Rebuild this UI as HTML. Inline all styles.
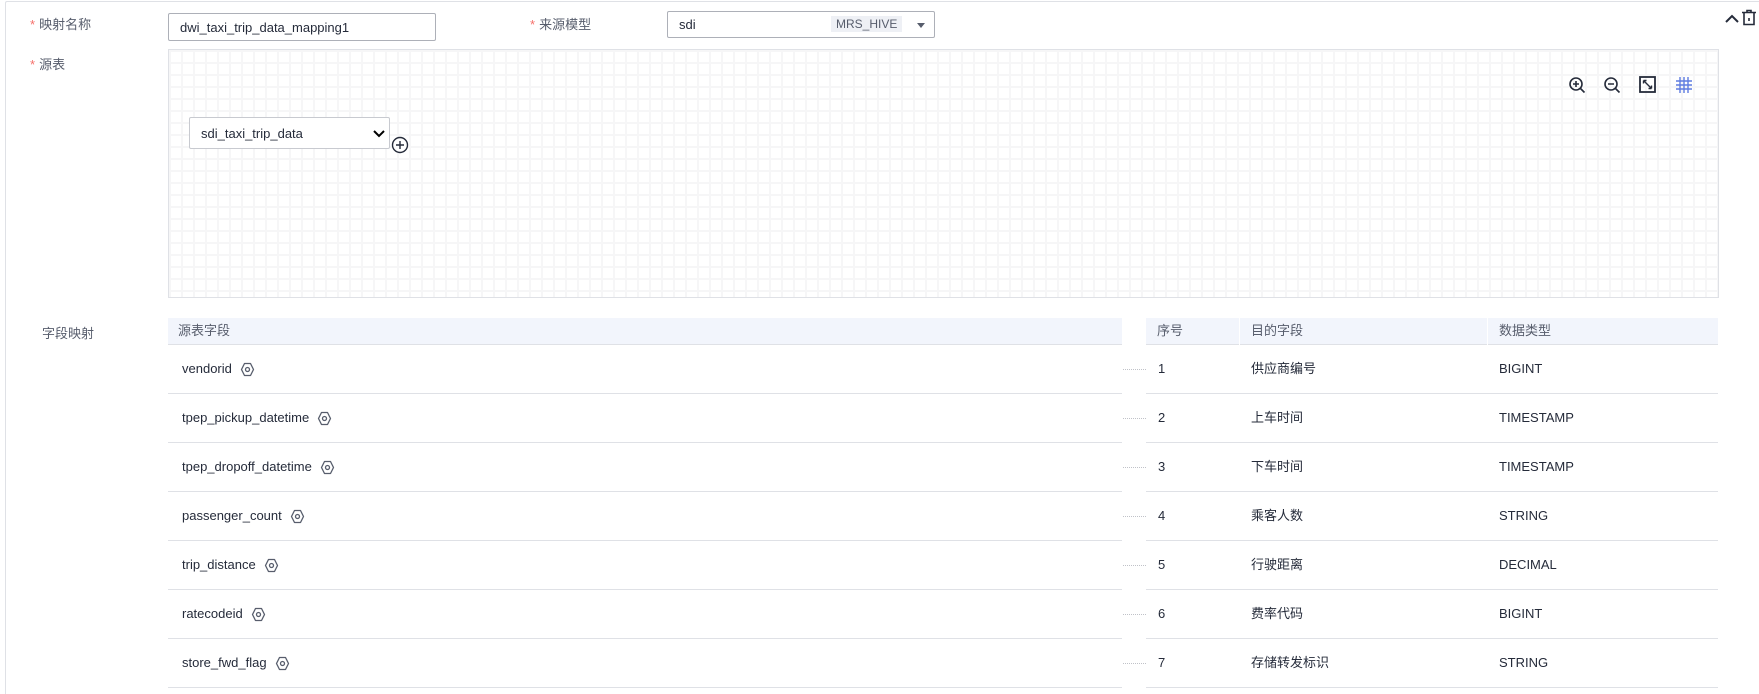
<!DOCTYPE html>
<html><head><meta charset="utf-8"><style>
*{box-sizing:border-box;margin:0;padding:0}
html,body{width:1759px;height:694px;overflow:hidden}
body{background:#fff;font-family:"Liberation Sans","Noto Sans CJK SC",sans-serif;font-size:13px;color:#252b3a;position:relative}
.a{position:absolute}
.card{left:5px;top:1px;width:1754px;height:693px;border:1px solid #dfe1e6;border-bottom:0;border-right:0;border-radius:2px 0 0 0}
.lbl{font-size:13px;color:#575d6c;white-space:nowrap;line-height:20px}
.lbl b{color:#f66f6a;font-weight:normal;margin-right:4px}
.inp{border:1px solid #adb0b8;border-radius:2px;background:#fff;padding-left:11px;display:flex;align-items:center}
.grid{background-color:#fff;background-image:linear-gradient(#f6f6f7 2px,transparent 2px),linear-gradient(90deg,#f6f6f7 2px,transparent 2px);background-size:12px 12px;border:1px solid #dfe1e6}
.th{background:#f2f5fc;height:27px;border-bottom:1px solid #dfe1e6;color:#575d6c}
.row{height:49px;border-bottom:1px solid #dfe1e6}
.t{position:absolute;white-space:nowrap;line-height:20px;display:flex;align-items:center}
.th .t{top:3px}
.row .t{top:14px}
</style></head><body>
<div class="a card"></div>
<div class="a lbl" style="left:30px;top:15px"><b>*</b>映射名称</div>
<div class="a inp" style="left:168px;top:13px;width:268px;height:28px">dwi_taxi_trip_data_mapping1</div>
<div class="a lbl" style="left:530px;top:15px"><b>*</b>来源模型</div>
<div class="a inp" style="left:667px;top:11px;width:268px;height:27px">sdi
<span class="a" style="left:163px;top:4px;background:#eef0f5;color:#575d6c;padding:1px 5px;font-size:12px">MRS_HIVE</span>
<svg class="a" style="left:248px;top:9px" width="10" height="8"><path d="M1 2h8L5 7z" fill="#575d6c"/></svg></div>
<svg class="a" style="left:1724px;top:11px" width="16" height="14"><path d="M2 11L8 5l6 6" fill="none" stroke="#252b3a" stroke-width="2"/></svg>
<svg class="a" style="left:1741px;top:9px" width="16" height="17"><path d="M1 3.5h14M6 3.5V1.5h4v2M3 3.5v12h10v-12" fill="none" stroke="#252b3a" stroke-width="1.6"/><path d="M8 9v3" stroke="#252b3a" stroke-width="1.6"/></svg>
<div class="a lbl" style="left:30px;top:55px"><b>*</b>源表</div>
<div class="a grid" style="left:168px;top:49px;width:1551px;height:249px"></div>
<svg class="a" style="left:1568px;top:76px" width="18" height="18"><circle cx="8" cy="8" r="6" fill="none" stroke="#252b3a" stroke-width="1.6"/><path d="M12.5 12.5l4 4M5 8h6M8 5v6" stroke="#252b3a" stroke-width="1.6"/></svg>
<svg class="a" style="left:1603px;top:76px" width="18" height="18"><circle cx="8" cy="8" r="6" fill="none" stroke="#252b3a" stroke-width="1.6"/><path d="M12.5 12.5l4 4M5 8h6" stroke="#252b3a" stroke-width="1.6"/></svg>
<svg class="a" style="left:1639px;top:76px" width="18" height="18"><rect x="1" y="1" width="15" height="15" fill="none" stroke="#252b3a" stroke-width="1.8"/><path d="M4.5 4.5l8 8M4.5 4.5h3M4.5 4.5v3M12.5 12.5h-3M12.5 12.5v-3" stroke="#252b3a" stroke-width="1.4"/></svg>
<svg class="a" style="left:1675px;top:76px" width="18" height="18"><path d="M5 1v16M9 1v16M13 1v16M1 5h16M1 9h16M1 13h16" stroke="#5e7ce0" stroke-width="1.4"/></svg>
<div class="a inp" style="left:189px;top:117px;width:201px;height:32px;border-color:#c8cad0">sdi_taxi_trip_data
<svg class="a" style="left:183px;top:11px" width="12" height="9"><path d="M1 2l5 5 5-5" fill="none" stroke="#000" stroke-width="2"/></svg></div>
<svg class="a" style="left:391px;top:136px" width="18" height="18"><circle cx="9" cy="9" r="7.5" fill="#fff" stroke="#252b3a" stroke-width="1.4"/><path d="M5 9h8M9 5v8" stroke="#252b3a" stroke-width="1.4"/></svg>
<div class="a lbl" style="left:42px;top:324px">字段映射</div>
<div class="a th" style="left:168px;top:318px;width:954px"><span class="t" style="left:10px">源表字段</span></div>
<div class="a th" style="left:1146px;top:318px;width:572px"><span class="t" style="left:11px">序号</span><span class="t" style="left:105px">目的字段</span><span class="t" style="left:353px">数据类型</span>
<div class="a" style="left:93px;top:0;width:1px;height:27px;background:#fff"></div><div class="a" style="left:341px;top:0;width:1px;height:27px;background:#fff"></div></div>
<div id="rows"></div>
<script>
var d=[["vendorid","供应商编号","BIGINT"],["tpep_pickup_datetime","上车时间","TIMESTAMP"],["tpep_dropoff_datetime","下车时间","TIMESTAMP"],["passenger_count","乘客人数","STRING"],["trip_distance","行驶距离","DECIMAL"],["ratecodeid","费率代码","BIGINT"],["store_fwd_flag","存储转发标识","STRING"]];
var g='<svg width="15" height="15" viewBox="0 0 15 15" style="margin-left:8px"><path d="M4.5 1.5h6l3 6-3 6h-6l-3-6z" fill="none" stroke="#575d6c" stroke-width="1.3" stroke-linejoin="round"/><circle cx="7.5" cy="7.5" r="2" fill="none" stroke="#575d6c" stroke-width="1.3"/></svg>';
var h='';
d.forEach(function(r,i){var y=345+i*49;
h+='<div class="a row" style="left:168px;top:'+y+'px;width:954px"><span class="t" style="left:14px">'+r[0]+g+'</span></div>';
h+='<div class="a" style="left:1123px;top:'+(y+24)+'px;width:23px;border-top:1px dotted #c0c2c8"></div>';
h+='<div class="a row" style="left:1146px;top:'+y+'px;width:572px"><span class="t" style="left:12px">'+(i+1)+'</span><span class="t" style="left:105px">'+r[1]+'</span><span class="t" style="left:353px">'+r[2]+'</span></div>';});
document.getElementById('rows').innerHTML=h;
</script>
</body></html>
